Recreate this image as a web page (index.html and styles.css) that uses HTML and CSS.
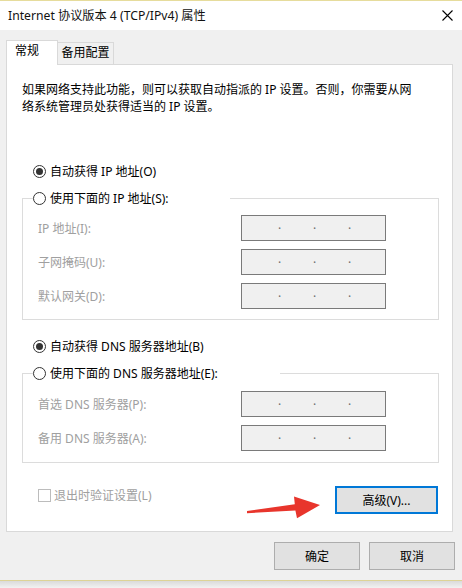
FILE: index.html
```html
<!DOCTYPE html>
<html lang="zh-CN">
<head>
<meta charset="utf-8">
<title>Internet 协议版本 4 (TCP/IPv4) 属性</title>
<link rel="stylesheet" href="styles.css">
</head>
<body>
<div class="window">
  <div class="topline"></div>
  <div class="titlebar">
    <span class="title">Internet 协议版本 4 (TCP/IPv4) 属性</span>
    <svg class="close" width="11" height="11" viewBox="0 0 11 11"><path d="M0.5 0.5L10.5 10.5M10.5 0.5L0.5 10.5" stroke="#000" stroke-width="1.1" fill="none"/></svg>
  </div>
  <div class="client">
    <div class="tabs">
      <div class="tab active">常规</div>
      <div class="tab">备用配置</div>
    </div>
    <div class="panel">
      <p class="desc">如果网络支持此功能，则可以获取自动指派的 IP 设置。否则，你需要从网<br>络系统管理员处获得适当的 IP 设置。</p>

      <div class="radio-row first"><span class="radio on"></span><span>自动获得 IP 地址(O)</span></div>
      <fieldset class="group">
        <legend class="legend ip"><span class="radio-row"><span class="radio"></span><span>使用下面的 IP 地址(S):</span></span></legend>
        <div class="fields ip-fields">
          <span class="lbl">IP 地址(I):</span>
          <div class="ipbox"><span class="oct"></span><span class="dot">.</span><span class="oct"></span><span class="dot">.</span><span class="oct"></span><span class="dot">.</span></div>
          <span class="lbl">子网掩码(U):</span>
          <div class="ipbox"><span class="oct"></span><span class="dot">.</span><span class="oct"></span><span class="dot">.</span><span class="oct"></span><span class="dot">.</span></div>
          <span class="lbl">默认网关(D):</span>
          <div class="ipbox"><span class="oct"></span><span class="dot">.</span><span class="oct"></span><span class="dot">.</span><span class="oct"></span><span class="dot">.</span></div>
        </div>
      </fieldset>

      <div class="radio-row second"><span class="radio on"></span><span>自动获得 DNS 服务器地址(B)</span></div>
      <fieldset class="group">
        <legend class="legend dns"><span class="radio-row"><span class="radio"></span><span>使用下面的 DNS 服务器地址(E):</span></span></legend>
        <div class="fields dns-fields">
          <span class="lbl">首选 DNS 服务器(P):</span>
          <div class="ipbox"><span class="oct"></span><span class="dot">.</span><span class="oct"></span><span class="dot">.</span><span class="oct"></span><span class="dot">.</span></div>
          <span class="lbl">备用 DNS 服务器(A):</span>
          <div class="ipbox"><span class="oct"></span><span class="dot">.</span><span class="oct"></span><span class="dot">.</span><span class="oct"></span><span class="dot">.</span></div>
        </div>
      </fieldset>

      <div class="bottom-row">
        <span class="check-row"><span class="checkbox"></span><span class="lbl">退出时验证设置(L)</span></span>
        <button class="btn adv" type="button">高级(V)...</button>
      </div>
    </div>
    <div class="actions">
      <button class="btn" type="button">确定</button>
      <button class="btn" type="button">取消</button>
    </div>
  </div>
  <div class="bottomline"></div>
  <div class="shadow"></div>

  <svg class="arrow" width="462" height="588" viewBox="0 0 462 588">
    <polygon points="247,511 294.8,504.2 294,496.5 320,505 297,518.3 295.4,510.6 247,513.2" fill="#e8352c"/>
  </svg>
</div>
</body>
</html>
```

FILE: styles.css
```css
* {
  box-sizing: border-box;
}

body {
  margin: 0;
  background: #f0f0f0;
  font-family: "Noto Sans", "Noto Sans CJK SC", sans-serif;
  font-size: 12px;
  color: #000;
}

.window {
  position: relative;
  width: 462px;
  height: 588px;
  overflow: hidden;
  background: #f0f0f0;
}

.topline {
  height: 1px;
  background: #e6dc9c;
}

.titlebar {
  height: 29px;
  background: #fff;
  display: flex;
  align-items: center;
  justify-content: space-between;
  padding: 0 9px 0 8px;
}

.title {
  font-size: 12.2px;
  line-height: 16px;
  white-space: nowrap;
  color: #111;
}

.close {
  display: block;
}

.client {
  padding: 10px 0 10px 6px;
}

.tabs {
  display: flex;
  align-items: flex-end;
  height: 24px;
  position: relative;
  z-index: 1;
}

.tab {
  height: 22px;
  width: 57px;
  margin-left: -1px;
  border: 1px solid #d9d9d9;
  border-bottom: none;
  background: #f0f0f0;
  line-height: 20px;
  text-align: center;
  white-space: nowrap;
}

.tab.active {
  position: relative;
  z-index: 2;
  height: 25px;
  width: 52px;
  margin-left: 0;
  margin-bottom: -1px;
  background: #fff;
  text-align: left;
  padding-left: 8px;
}

.panel {
  width: 447px;
  height: 468px;
  background: #fff;
  border: 1px solid #d9d9d9;
  padding: 0 13px 0 15px;
}

.desc {
  margin: 0;
  padding-top: 16px;
  line-height: 17px;
  white-space: nowrap;
}

.radio-row {
  display: flex;
  align-items: center;
  height: 20px;
  white-space: nowrap;
}

.radio-row.first {
  margin-top: 46px;
  padding-left: 11px;
}

.radio-row.second {
  margin-top: 16px;
  padding-left: 11px;
}

.radio {
  flex: none;
  width: 13px;
  height: 13px;
  border: 1px solid #333;
  border-radius: 50%;
  background: #fff;
  margin-right: 4px;
  display: flex;
  align-items: center;
  justify-content: center;
}

.radio.on::after {
  content: "";
  width: 7px;
  height: 7px;
  border-radius: 50%;
  background: #333;
}

.group {
  margin: 7px 0 0;
  padding: 0;
  min-width: 0;
  border: 1px solid #dcdcdc;
}

.legend {
  padding: 0;
  margin-left: 10px;
  height: 20px;
  background: #fff;
}

.legend.ip {
  width: 197px;
}

.legend.dns {
  width: 247px;
}

.fields {
  display: grid;
  grid-template-columns: 203px 145px;
  row-gap: 8px;
  align-items: center;
  padding-left: 15px;
}

.ip-fields {
  padding-top: 7px;
  padding-bottom: 10px;
}

.dns-fields {
  padding-top: 8px;
  padding-bottom: 11px;
}

.lbl {
  color: #a0a0a0;
  white-space: nowrap;
}

.ipbox {
  height: 26px;
  border: 1px solid #7a7a7a;
  background: #f0f0f0;
  display: flex;
  align-items: flex-start;
  padding-left: 5px;
}

.oct {
  width: 30px;
}

.dot {
  width: 5px;
  text-align: center;
  line-height: 18px;
  color: #6d6d6d;
}

.bottom-row {
  display: flex;
  justify-content: space-between;
  align-items: flex-start;
  margin-top: 22px;
}

.check-row {
  display: flex;
  align-items: center;
  height: 20px;
  padding-left: 16px;
}

.checkbox {
  width: 13px;
  height: 13px;
  border: 1px solid #bcbcbc;
  background: #fff;
  margin-right: 3px;
}

.btn {
  font: inherit;
  color: #000;
  width: 86px;
  height: 28px;
  padding: 0;
  background: #e1e1e1;
  border: 1px solid #adadad;
  border-radius: 0;
}

.btn.adv {
  width: 103px;
  margin-top: 1px;
  margin-right: 1px;
  border: 2px solid #0078d7;
}

.actions {
  display: flex;
  justify-content: flex-end;
  gap: 9px;
  margin-top: 10px;
  padding-right: 7px;
}

.bottomline {
  height: 1px;
  background: #ddd396;
}

.shadow {
  height: 7px;
  background: linear-gradient(#dadada, #f2f2f2);
}

.arrow {
  position: absolute;
  left: 0;
  top: 0;
  pointer-events: none;
}
```
